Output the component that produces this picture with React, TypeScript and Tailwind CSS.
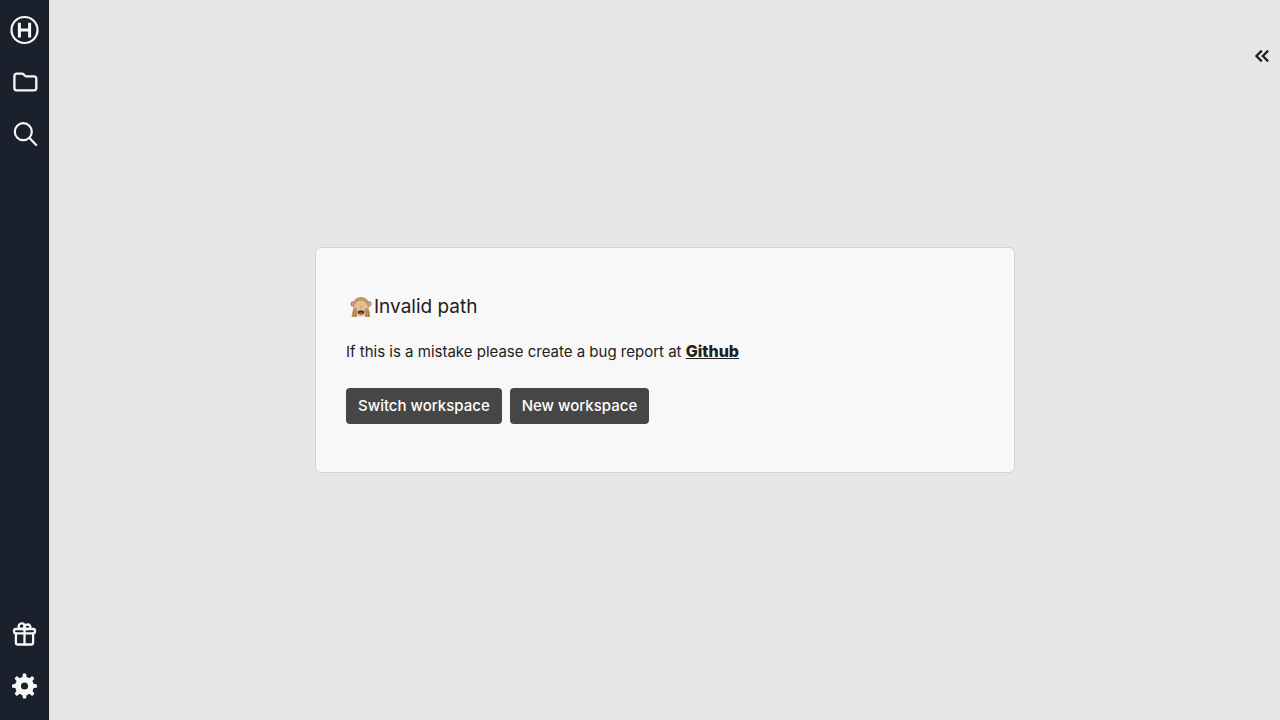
import type { ReactNode } from "react";

function RailButton({ label, children }: { label: string; children: ReactNode }) {
  return (
    <button type="button" aria-label={label} className="flex h-7 w-7 items-center justify-center text-[#f8f8f8]">
      {children}
    </button>
  );
}

function LogoIcon() {
  return (
    <svg viewBox="0 0 28 28" className="h-7 w-7 overflow-visible" fill="none" stroke="currentColor" aria-hidden="true">
      <circle cx="14.5" cy="14" r="13" strokeWidth="2.2" />
      <path d="M9.4 6.8v14.6M19.6 6.8v14.6M9.4 14h10.2" strokeWidth="3" />
    </svg>
  );
}

function FolderIcon() {
  return (
    <svg viewBox="0 0 28 28" className="h-7 w-7" fill="none" stroke="currentColor" strokeWidth="2.3" strokeLinejoin="round" aria-hidden="true">
      <path d="M6.8 5.7h5.1c.7 0 1.2.2 1.7.7l1.3 1.3c.4.4.8.6 1.4.6h7.6c1.4 0 2.4 1 2.4 2.4v9.2c0 1.4-1 2.4-2.4 2.4H6.8c-1.4 0-2.4-1-2.4-2.4V8.1c0-1.4 1-2.4 2.4-2.4Z" />
    </svg>
  );
}

function SearchIcon() {
  return (
    <svg viewBox="0 0 28 28" className="h-7 w-7" fill="none" stroke="currentColor" strokeWidth="2.2" strokeLinecap="round" aria-hidden="true">
      <circle cx="13.3" cy="11.7" r="8.5" />
      <path d="m19.5 18.1 6.7 6.8" />
    </svg>
  );
}

function GiftIcon() {
  return (
    <svg viewBox="0 0 28 28" className="h-7 w-7" fill="none" stroke="currentColor" strokeWidth="2.3" strokeLinecap="round" strokeLinejoin="round" aria-hidden="true">
      <rect x="4" y="9" width="21" height="4.4" rx="1.8" />
      <path d="M5.9 13.4v9c0 1.3.9 2.1 2.1 2.1h13c1.2 0 2.1-.8 2.1-2.1v-9" />
      <path d="M14.5 9v15.2M14.2 9h-2.8C8.6 9 8 6.5 9.2 4.7c1.7-2.4 5.3-1.4 5.3 1.5Z" />
      <path d="M14.5 9h3.2c2.6 0 3.3-2.2 2.2-3.6-1.5-1.7-5.4-.8-5.4 1.8Z" />
    </svg>
  );
}

const gearTeeth = [0, 45, 90, 135, 180, 225, 270, 315];

function GearIcon() {
  return (
    <svg viewBox="0 0 28 28" className="h-7 w-7" fill="currentColor" aria-hidden="true">
      <path fillRule="evenodd" d="M14.5 4.7a9.3 9.3 0 1 0 0 18.6 9.3 9.3 0 0 0 0-18.6Zm0 5.7a3.6 3.6 0 1 1 0 7.2 3.6 3.6 0 0 1 0-7.2Z" />
      {gearTeeth.map((angle) => (
        <path key={angle} d="M11.4 6q1.1-.6 1.2-1.5l.1-2q.1-1 1-1h1.6q.9 0 1 1l.1 2q.1.9 1.2 1.5Z" transform={`rotate(${angle} 14.5 14)`} />
      ))}
    </svg>
  );
}

function MonkeyIcon() {
  return (
    <svg viewBox="0 0 22 22" className="h-[22px] w-[22px]" role="img" aria-label="See-no-evil monkey">
      <circle cx="3.3" cy="8" r="2.8" fill="#a67c50" />
      <circle cx="18.7" cy="8" r="2.8" fill="#a67c50" />
      <circle cx="2.9" cy="8.1" r="1.8" fill="#e39c8e" />
      <circle cx="19.1" cy="8.1" r="1.8" fill="#e39c8e" />
      <path d="M11 1C5.8 1 3.1 4.7 3.1 10c0 6 3.2 10.2 7.9 10.2s7.9-4.2 7.9-10.2c0-5.3-2.7-9-7.9-9Z" fill="#be9664" />
      <ellipse cx="11" cy="16" rx="5" ry="4.6" fill="#e0bd94" />
      <path d="M7.6 15.4c1.8-1.2 5-1.2 6.8 0 .2 1.6-1.4 3-3.4 3s-3.6-1.4-3.4-3Z" fill="#3f2d25" />
      <path d="M9 17c1.2-.6 2.8-.6 4 0-.9 1-3.1 1-4 0Z" fill="#c7776d" />
      <path d="M4 12C4.4 8.6 7 5 10.6 4.6c.7 2.8.4 6.8-1.4 8.7-1.4 1.4-4.3.8-5.2-1.3Z" fill="#e8c39a" />
      <path d="M18 12c-.4-3.4-3-7-6.6-7.4-.7 2.8-.4 6.8 1.4 8.7 1.4 1.4 4.3.8 5.2-1.3Z" fill="#e8c39a" />
      <path d="M1.5 21c.9-2.6.2-5.3 1.9-8 .5-1 1.3-1.3 2.2-1.3 1.1.3 1.9 1.2 1.7 2.3-.3 2.3-.2 4.1 0 7Z" fill="#c29a66" />
      <path d="M20.5 21c-.9-2.6-.2-5.3-1.9-8-.5-1-1.3-1.3-2.2-1.3-1.1.3-1.9 1.2-1.7 2.3.3 2.3.2 4.1 0 7Z" fill="#c29a66" />
      <path d="M3.5 20.5c-.2-2.2.2-4.4 1-6.2M5.5 20.5c-.2-2 0-3.7.4-5.3M18.5 20.5c.2-2.2-.2-4.4-1-6.2M16.5 20.5c.2-2 0-3.7-.4-5.3" fill="none" stroke="#8d6842" strokeWidth=".6" />
      <path d="M6.5 9.8 9 7.2M7.4 11.1l2.2-2.2M15.5 9.8 13 7.2M14.6 11.1l-2.2-2.2" fill="none" stroke="#d5a678" strokeWidth=".5" />
    </svg>
  );
}

export default function App() {
  return (
    <div className="flex min-h-screen bg-[#e6e6e6] font-['Inter','Liberation_Sans',sans-serif] text-[#212121]">
      <nav aria-label="Main" className="flex w-[50px] shrink-0 flex-col items-center justify-between border-r border-[#dddde3] bg-[#1b212c] pt-4 pr-px pb-5">
        <div className="flex flex-col gap-6">
          <RailButton label="Home"><LogoIcon /></RailButton>
          <RailButton label="Files"><FolderIcon /></RailButton>
          <RailButton label="Search"><SearchIcon /></RailButton>
        </div>
        <div className="flex flex-col gap-6">
          <RailButton label="What's new"><GiftIcon /></RailButton>
          <RailButton label="Settings"><GearIcon /></RailButton>
        </div>
      </nav>
      <main className="relative flex min-w-0 flex-1 items-center justify-center">
        <section className="w-full max-w-[700px] rounded-md border border-[#d3d3d3] bg-[#f8f8f8] px-[30px] pt-[45px] pb-12">
          <h1 className="flex h-7 items-center gap-0.5 pl-1 text-[19px] leading-7">
            <MonkeyIcon />
            Invalid path
          </h1>
          <p className="mt-[19px] text-[15px] leading-6">
            If this is a mistake please create a bug report at{" "}
            <a href="https://github.com" className="text-[16px] leading-none font-extrabold underline">Github</a>
          </p>
          <div className="mt-6 flex gap-2">
            <button type="button" className="h-9 rounded bg-[#464646] px-3 text-[15px] leading-6 font-medium text-white">Switch workspace</button>
            <button type="button" className="h-9 rounded bg-[#464646] px-3 text-[15px] leading-6 font-medium text-white">New workspace</button>
          </div>
        </section>
        <button type="button" aria-label="Expand side panel" className="absolute top-11 right-1.5">
          <svg viewBox="0 0 24 24" className="h-6 w-6" fill="none" stroke="currentColor" strokeWidth="2.3" aria-hidden="true">
            <path d="m18.2 6.6-5.4 5.4 5.4 5.4M11.8 6.6 6.4 12l5.4 5.4" />
          </svg>
        </button>
      </main>
    </div>
  );
}
